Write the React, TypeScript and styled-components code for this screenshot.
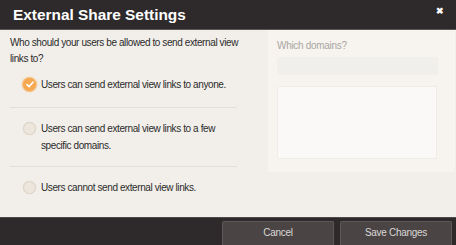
import React from 'react'
import styled, { createGlobalStyle } from 'styled-components'

const Global = createGlobalStyle`
  html, body { margin: 0; padding: 0; background: #2e2a2b; }
  body { font-family: "Liberation Sans", Arial, sans-serif; }
`

const Dialog = styled.div`
  width: 456px;
  height: 245px;
  display: flex;
  flex-direction: column;
  overflow: hidden;
  background: #f2efea;
`

const Header = styled.div`
  height: 29px;
  flex: none;
  display: flex;
  align-items: center;
  justify-content: space-between;
  padding: 0 12px 0 13px;
  background: #2e2a2b;
  border-bottom: 1px solid #5a5556;
`

const Title = styled.h1`
  margin: 0;
  font-size: 15.4px;
  font-weight: bold;
  color: #fff;
`

const Close = styled.span`
  color: #fff;
  font-size: 9px;
  font-weight: bold;
  line-height: 1;
  margin-top: -7px;
`

const Body = styled.div`
  flex: 1;
  display: flex;
  min-height: 0;
`

const Left = styled.div`
  width: 258px;
  padding: 5px 0 0 10px;
  box-sizing: border-box;
`

const Question = styled.p`
  margin: 0;
  font-size: 10px;
  letter-spacing: -0.4px;
  line-height: 16px;
  color: #2b2b2b;
  width: 235px;
`

const Option = styled.div<{ $last?: boolean }>`
  display: flex;
  align-items: flex-start;
  gap: 5px;
  padding: 12px 0 12px 13px;
  margin-right: 21px;
  border-bottom: ${p => (p.$last ? 'none' : '1px solid #e2ded8')};

  &:first-of-type {
    padding-top: 9px;
    padding-bottom: 14px;
  }
`

const Radio = styled.span<{ $checked?: boolean }>`
  width: 13px;
  height: 13px;
  flex: none;
  border-radius: 50%;
  margin-top: 2px;
  display: flex;
  align-items: center;
  justify-content: center;
  background: ${p => (p.$checked ? '#f4a952' : '#ece6dc')};
  box-shadow: ${p =>
    p.$checked ? '0 0 0 1px #f7c07f, 0 0 3px #f6b56a' : '0 0 0 1px #ddd3c6 inset, 0 0 1px #d8cfc2'};
`

const Label = styled.span`
  font-size: 10px;
  letter-spacing: -0.4px;
  line-height: 17px;
  color: #2b2b2b;
  white-space: nowrap;
`

const Right = styled.div`
  flex: 1;
  align-self: flex-start;
  height: 142px;
  margin-left: 10px;
  margin-right: 1px;
  background: #f7f4ef;
  padding: 9px 17px 0 9px;
  box-sizing: border-box;
`

const FieldLabel = styled.div`
  font-size: 10px;
  letter-spacing: -0.3px;
  color: #a9a6a2;
  line-height: 14px;
  margin-bottom: 4px;
`

const Input = styled.div`
  height: 18px;
  background: #f1efec;
  margin-bottom: 11px;
`

const TextArea = styled.div`
  height: 71px;
  background: #faf9f7;
  border: 1px solid #f0ede8;
  margin-right: 1px;
`

const Footer = styled.div`
  height: 24px;
  flex: none;
  display: flex;
  justify-content: flex-end;
  gap: 6px;
  padding: 3px 4px 0 0;
  background: #2e2a2b;
  border-top: 1px solid #4e494a;
`

const Button = styled.button`
  width: 112px;
  height: 24px;
  background: #4a4445;
  border: 1px solid #5e5859;
  border-bottom: none;
  border-radius: 2px 2px 0 0;
  color: #dcd8d6;
  font-family: "Liberation Sans", Arial, sans-serif;
  font-size: 10px;
  letter-spacing: -0.3px;
  padding: 0 0 3px;
`

const Check = () => (
  <svg width="8" height="7" viewBox="0 0 8 7">
    <path d="M1 3.6 L3.1 5.6 L7 1.2" fill="none" stroke="#fff" strokeWidth="1.6" strokeLinecap="round" />
  </svg>
)

export default function App() {
  return (
    <>
      <Global />
      <Dialog>
        <Header>
          <Title>External Share Settings</Title>
          <Close>✖</Close>
        </Header>
        <Body>
          <Left>
            <Question>Who should your users be allowed to send external view links to?</Question>
            <Option>
              <Radio $checked>
                <Check />
              </Radio>
              <Label>Users can send external view links to anyone.</Label>
            </Option>
            <Option>
              <Radio />
              <Label>
                Users can send external view links to a few
                <br />
                specific domains.
              </Label>
            </Option>
            <Option $last>
              <Radio />
              <Label>Users cannot send external view links.</Label>
            </Option>
          </Left>
          <Right>
            <FieldLabel>Which domains?</FieldLabel>
            <Input />
            <TextArea />
          </Right>
        </Body>
        <Footer>
          <Button>Cancel</Button>
          <Button>Save Changes</Button>
        </Footer>
      </Dialog>
    </>
  )
}
